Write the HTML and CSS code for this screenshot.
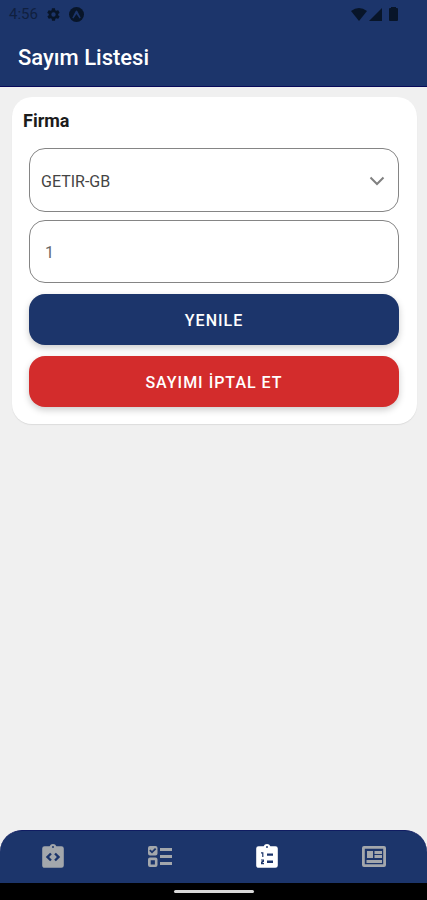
FILE: index.html
```html
<!DOCTYPE html>
<html lang="tr">
<head>
<meta charset="utf-8">
<meta name="viewport" content="width=device-width, initial-scale=1">
<title>Sayım Listesi</title>
<link rel="stylesheet" href="styles.css">
</head>
<body>
<header class="header">
  <div class="status">
    <div class="status-group">
      <span class="clock">4:56</span>
      <svg class="status-icon" viewBox="0 0 24 24" aria-hidden="true"><path d="M19.4 13c0-.3.1-.6.1-1s0-.7-.1-1l2.100-1.600c.2-.2.2-.4.100-.6l-2-3.500c-.1-.2-.4-.3-.6-.2l-2.500 1c-.5-.4-1.100-.7-1.700-1l-.4-2.600c0-.3-.2-.5-.5-.5h-4c-.2 0-.4.2-.5.400l-.4 2.700c-.6.200-1.100.6-1.700 1l-2.500-1c-.2-.1-.5 0-.6.2l-2 3.500c-.1.200-.1.500.1.600L4.500 11c0 .3-.1.600-.1 1s0 .7.100 1l-2.100 1.600c-.2.200-.2.400-.1.600l2 3.500c.1.200.4.300.6.200l2.500-1c.5.400 1.100.7 1.700 1l.4 2.600c0 .3.300.5.500.5h4c.2 0 .5-.2.500-.400l.4-2.700c.6-.2 1.200-.6 1.700-1l2.500 1c.2.100.5 0 .6-.2l2-3.500c.1-.2.100-.5-.1-.6zM12 15.500a3.500 3.500 0 1 1 0-7 3.500 3.500 0 0 1 0 7z"/></svg>
      <svg class="status-icon" viewBox="0 0 16 16" aria-hidden="true"><circle cx="8" cy="8" r="8"/><path class="mark" d="M3.500 11.500 7 4.500Q8 3 9 4.500l3.500 7-1.200.8L8 7.500l-3.300 4.800z"/></svg>
    </div>
    <div class="status-group signals">
      <svg width="16" height="13" viewBox="0 0 16 13" aria-hidden="true"><path d="M0 3Q8-3 16 3L8 13z"/></svg>
      <svg width="13" height="13" viewBox="0 0 13 13" aria-hidden="true"><path d="M13 0v13H0z"/></svg>
      <svg class="battery" width="9" height="14" viewBox="0 0 9 14" aria-hidden="true"><path d="M2 0h5v1H8q1 0 1 1V13q0 1-1 1H1q-1 0-1-1V2q0-1 1-1h1z"/></svg>
    </div>
  </div>
  <h1 class="title">Sayım Listesi</h1>
</header>

<main class="content">
  <form class="card">
    <label class="label" for="firma">Firma</label>
    <div class="select-wrap">
      <select class="field select" id="firma">
        <option>GETIR-GB</option>
      </select>
      <svg class="chevron" width="16" height="10" viewBox="0 0 16 10" aria-hidden="true"><path d="M1.500 1.500 8 8l6.500-6.500"/></svg>
    </div>
    <input class="field input" type="text" value="1" aria-label="Sayım numarası">
    <button class="button primary" type="button">YENILE</button>
    <button class="button danger" type="button">SAYIMI İPTAL ET</button>
  </form>
</main>

<footer class="footer">
  <nav class="tabs">
    <a class="tab" href="#kod" aria-label="Kod">
      <svg viewBox="2 2 20 20" aria-hidden="true"><path fill-rule="evenodd" d="M19 3h-4.200a3 3 0 0 0-5.600 0H5a2 2 0 0 0-2 2v14c0 1.100.9 2 2 2h14a2 2 0 0 0 2-2V5a2 2 0 0 0-2-2zM12 2.800a.8.8 0 1 1 0 1.600.8.8 0 0 1 0-1.600zM11 14.200l-1.400 1.400L6 12l3.600-3.600L11 9.800 8.800 12zm3.400 1.400L13 14.200l2.200-2.200L13 9.800l1.400-1.400L18 12z"/></svg>
    </a>
    <a class="tab" href="#secim" aria-label="Seçim">
      <svg viewBox="0 0 24 24" aria-hidden="true"><path fill-rule="evenodd" d="M2 1h5.500a2 2 0 0 1 2 2v5.500a2 2 0 0 1-2 2H2a2 2 0 0 1-2-2V3a2 2 0 0 1 2-2zM4 8.500 8.300 4.200 7 3 4 6 2.500 4.500 1.200 5.800zM2 12.500h5.500a2 2 0 0 1 2 2V20a2 2 0 0 1-2 2H2a2 2 0 0 1-2-2v-5.500a2 2 0 0 1 2-2zm.7 2.700v4.200h4.200v-4.200zM12 3h12v3H12zm0 7h12v3H12zm0 7h12v3H12z"/></svg>
    </a>
    <a class="tab active" href="#sayim" aria-label="Sayım" aria-current="page">
      <svg viewBox="2 2 20 20" aria-hidden="true"><path fill-rule="evenodd" d="M19 3h-4.200a3 3 0 0 0-5.600 0H5a2 2 0 0 0-2 2v14c0 1.100.9 2 2 2h14a2 2 0 0 0 2-2V5a2 2 0 0 0-2-2zM12 2.800a.8.8 0 1 1 0 1.600.8.8 0 0 1 0-1.600zM7 8h2v4H8V9H7zM7 14h2.500v2L8 17h1.500v1H7v-2l1.500-1H7zM12 9h5v2h-5zm0 6h5v2h-5z"/></svg>
    </a>
    <a class="tab" href="#liste" aria-label="Liste">
      <svg viewBox="0 0 24 24" aria-hidden="true"><path fill-rule="evenodd" d="M2 1h20a2 2 0 0 1 2 2v17a2 2 0 0 1-2 2H2a2 2 0 0 1-2-2V3a2 2 0 0 1 2-2zm.8 2.800v15.400h18.400V3.800zM5 6h6v7H5zM12.500 6H20v3h-7.500zm0 4H20v3h-7.500zM4.500 15H20v3H4.500z"/></svg>
    </a>
  </nav>
  <div class="home"><span class="home-bar"></span></div>
</footer>
</body>
</html>
```
FILE: styles.css
```css
* {
  box-sizing: border-box;
}

body {
  margin: 0;
  min-height: 100vh;
  display: flex;
  flex-direction: column;
  background: #f0f0f0;
  font-family: Roboto, "Liberation Sans", sans-serif;
}

.header {
  background: #1c356b;
  border-bottom: 1px solid #080a5a;
}

.status {
  display: flex;
  justify-content: space-between;
  align-items: center;
  height: 28px;
  padding: 0 29px 0 9px;
  color: #10203f;
}

.status-group {
  display: flex;
  align-items: center;
  gap: 8px;
}

.signals {
  gap: 2px;
}

.battery {
  margin-left: 5px;
}

.status svg {
  fill: #081529;
}

.status .mark {
  fill: #1c356b;
}

.clock {
  font-size: 15px;
}

.status-icon {
  width: 15px;
  height: 15px;
}

.title {
  margin: 0;
  padding: 0 18px;
  font-size: 22px;
  line-height: 60px;
  height: 58px;
  font-weight: 500;
  color: #fff;
}

.content {
  flex: 1;
  padding: 10px 10px 0 12px;
}

.card {
  display: flex;
  flex-direction: column;
  padding: 12px 18px 17px 17px;
  background: #fff;
  border-radius: 20px;
  box-shadow: 0 1px 1px #dcdcdc;
}

.label {
  margin: 0 0 15px -6px;
  font-size: 18px;
  line-height: 24px;
  font-weight: 700;
  color: #1c1c1c;
}

.select-wrap {
  position: relative;
}

.field {
  display: block;
  width: 100%;
  height: 64px;
  border: 1px solid #858585;
  border-radius: 16px;
  background: #fff;
  font-family: inherit;
  font-size: 16px;
}

.select {
  appearance: none;
  padding: 2px 40px 0 11px;
  color: #444;
}

.chevron {
  position: absolute;
  top: 28px;
  right: 14px;
  fill: none;
  stroke: #808080;
  stroke-width: 2;
  pointer-events: none;
}

.input {
  height: 63px;
  margin-top: 8px;
  padding: 2px 15px 0;
  color: #666;
}

.button {
  height: 51px;
  margin-top: 11px;
  padding: 2px 16px 0;
  border: 0;
  border-radius: 16px;
  font-family: inherit;
  font-size: 16px;
  font-weight: 500;
  letter-spacing: 1px;
  color: #fff;
  box-shadow: 0 3px 7px rgba(0, 0, 0, 0.2);
}

.primary {
  background: #1c356b;
}

.danger {
  background: #d32c2c;
}

.tabs {
  display: flex;
  height: 53px;
  background: #1c356b;
  border-top: 1px solid #101c62;
  border-radius: 22px 22px 0 0;
}

.tab {
  flex: 1;
  display: flex;
  align-items: center;
  justify-content: center;
  color: #a3a7ac;
}

.tab svg {
  width: 24px;
  height: 24px;
  fill: currentColor;
  overflow: visible;
}

.active {
  color: #fff;
}

.home {
  display: flex;
  align-items: center;
  justify-content: center;
  height: 17px;
  background: #000;
}

.home-bar {
  width: 80px;
  height: 3px;
  border-radius: 2px;
  background: #d8d8d8;
}
```
